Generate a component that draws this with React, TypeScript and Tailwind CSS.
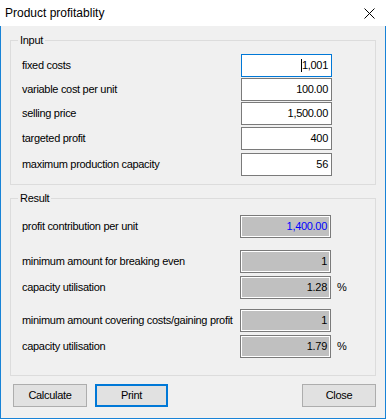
const inputRows = [
  { label: 'fixed costs', value: '1,001', gap: 'mt-[7px]', focused: true },
  { label: 'variable cost per unit', value: '100.00', gap: 'mt-[1px]' },
  { label: 'selling price', value: '1,500.00', gap: 'mt-[1px]' },
  { label: 'targeted profit', value: '400', gap: 'mt-[2px]' },
  { label: 'maximum production capacity', value: '56', gap: 'mt-[3px]' },
];

const resultRows = [
  { label: 'profit contribution per unit', value: '1,400.00', gap: 'mt-[10px]', blue: true },
  { label: 'minimum amount for breaking even', value: '1', gap: 'mt-[12px]' },
  { label: 'capacity utilisation', value: '1.28', gap: 'mt-[3px]', pct: true },
  { label: 'minimum amount covering costs/gaining profit', value: '1', gap: 'mt-[10px]' },
  { label: 'capacity utilisation', value: '1.79', gap: 'mt-[3px]', pct: true },
];

const GroupBox = ({ title, className, children }: { title: string; className: string; children: React.ReactNode }) => (
  <div className={`ml-[9px] w-[366px] border border-[#dcdcdc] pl-[11px] ${className}`}>
    <span className="block w-fit -mt-[7px] -ml-[4px] px-[2px] bg-[#f0f0f0] leading-[13px]">{title}</span>
    {children}
  </div>
);

const App = () => {
  return (
    <div className="w-[386px] h-[419px] flex flex-col bg-white text-[11px] tracking-[-0.3px] text-black font-['Liberation_Sans',Arial,sans-serif]">
      <div className="h-[26px] flex items-center justify-between pl-[5px] pr-[11px]">
        <span className="text-[12px] tracking-normal">Product profitablity</span>
        <svg width="11" height="11" viewBox="0 0 11 11" className="mt-[1px]">
          <path d="M0.5 0.5 L10.5 10.5 M10.5 0.5 L0.5 10.5" stroke="#000" strokeWidth="1" />
        </svg>
      </div>

      <div className="flex-1 flex flex-col bg-[#f0f0f0] border-x border-b border-[#1883d7]">
        <GroupBox title="Input" className="mt-[14px] h-[145px]">
          {inputRows.map((r) => (
            <div key={r.label} className={`flex items-center h-[23px] ${r.gap}`}>
              <span className="w-[219px]">{r.label}</span>
              <div
                className={`w-[91px] h-[23px] bg-white border flex items-center justify-end pr-[3px] ${
                  r.focused ? 'border-[#0078d7]' : 'border-[#7a7a7a]'
                }`}
              >
                {r.focused && <span className="w-px h-[13px] bg-black" />}
                <span>{r.value}</span>
              </div>
            </div>
          ))}
        </GroupBox>

        <GroupBox title="Result" className="mt-[13px] h-[178px]">
          {resultRows.map((r, i) => (
            <div key={i} className={`flex items-center h-[23px] ${r.gap}`}>
              <span className="w-[218px] whitespace-nowrap">{r.label}</span>
              <div className="w-[91px] h-[23px] bg-[#c0c0c0] border border-[#7a7a7a] shadow-[inset_0_0_0_1px_#ffffff] flex items-center justify-end pr-[3px]">
                <span className={r.blue ? 'text-[#0000ff]' : ''}>{r.value}</span>
              </div>
              {r.pct && <span className="ml-[6px]">%</span>}
            </div>
          ))}
        </GroupBox>

        <div className="mt-[8px] flex items-start justify-between pl-[12px] pr-[9px]">
          <div className="flex gap-[8px]">
            <button className="w-[74px] h-[23px] bg-[#e1e1e1] border border-[#adadad]">Calculate</button>
            <button className="w-[73px] h-[23px] bg-[#e1e1e1] border-2 border-[#0078d7]">Print</button>
          </div>
          <button className="w-[74px] h-[23px] bg-[#e1e1e1] border border-[#adadad]">Close</button>
        </div>
      </div>
    </div>
  );
};

export default App;
